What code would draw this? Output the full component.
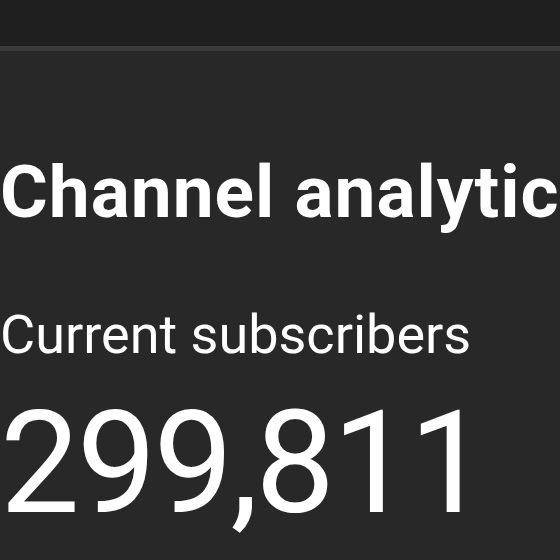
export default function App() {
  return (
    <div className="w-[560px] h-[560px] overflow-hidden bg-[#282828] text-white font-['Roboto',sans-serif]">
      <div className="h-[46px] bg-[#1f1f1f]" />
      <div className="h-[5px] bg-[#3a3a3a]" />
      <div className="pt-[105px]">
        <h1 className="text-[73px] font-bold leading-none whitespace-nowrap tracking-[1px]">Channel analytics</h1>
        <p className="mt-[79px] text-[54px] leading-none whitespace-nowrap">Current subscribers</p>
        <p className="mt-[31px] text-[142px] leading-none whitespace-nowrap tracking-[-3px]">299,811</p>
      </div>
    </div>
  );
}
